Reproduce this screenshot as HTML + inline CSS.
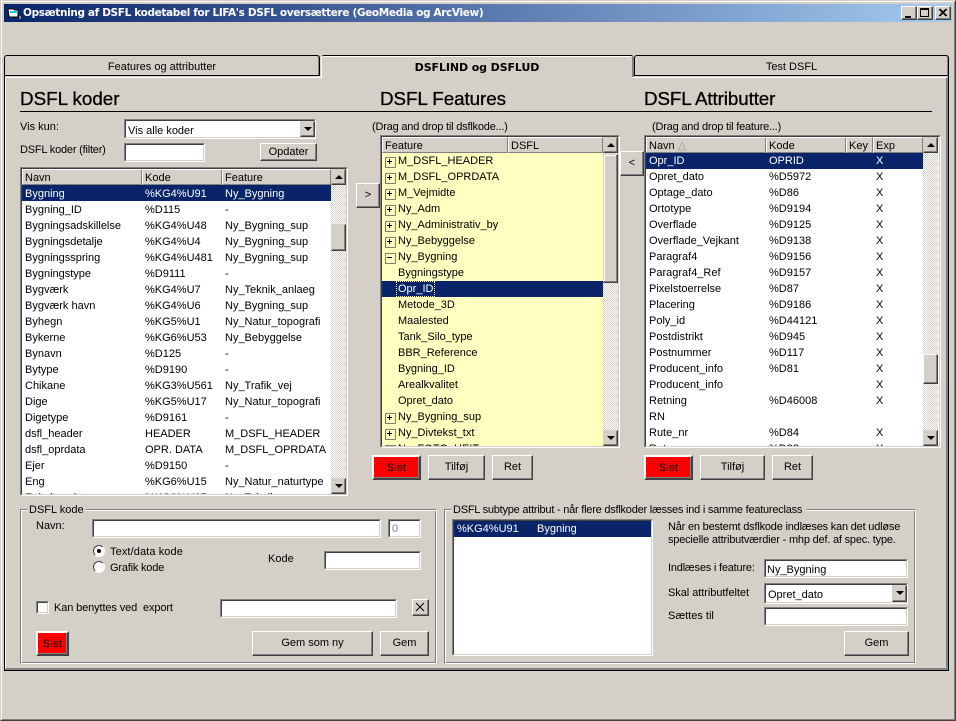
<!DOCTYPE html>
<html><head><meta charset="utf-8"><style>
html,body{margin:0;padding:0}
body{width:956px;height:721px;overflow:hidden;position:relative;background:#d4d0c8;font:11px/13px "Liberation Sans",sans-serif;color:#000}
div,span,table{box-sizing:border-box}
.a{position:absolute}
.t{position:absolute;white-space:nowrap;line-height:13px}
.n{letter-spacing:-.2px}
.s{position:absolute;border:1px solid;border-color:#808080 #fff #fff #808080;background:#fff}
.s>i{display:block;position:absolute;left:0;top:0;right:0;bottom:0;border:1px solid;border-color:#404040 #d4d0c8 #d4d0c8 #404040}
.b{position:absolute;background:#d4d0c8;border:1px solid;border-color:#fff #404040 #404040 #fff;box-shadow:inset -1px -1px #808080;text-align:center;white-space:nowrap}
.r2{position:absolute;background:#f00;border:2px solid;border-color:#fff #404040 #404040 #fff;text-align:center;box-shadow:inset -1px -1px #808080}
.h{position:absolute;top:0;height:16px;background:#d4d0c8;border:1px solid;border-color:#fff #808080 #808080 #fff;line-height:16px;padding-left:2px;white-space:nowrap;overflow:hidden}
.d{position:absolute;width:0;height:0;border-left:4px solid transparent;border-right:4px solid transparent;border-top:4px solid #000}
.u{position:absolute;width:0;height:0;border-left:4px solid transparent;border-right:4px solid transparent;border-bottom:4px solid #000}
.tr{position:absolute;background:repeating-conic-gradient(#fff 0 25%,#d4d0c8 0 50%) 0 0/2px 2px}
.rw{position:absolute;left:0;height:16px;line-height:16px;white-space:nowrap}
.rw span{position:absolute;top:1px}
.l3 .rw span{top:0}
.l1 .c1{left:3px}.l1 .c2{left:123px}.l1 .c3{left:203px}
.l3 .c1{left:3px}.l3 .c2{left:123px}.l3 .c4{left:230px}
.sel{background:#0a246a;color:#fff}
.pm{position:absolute;left:3px;top:4px;width:9px;height:9px;border:1px solid #808080;background:#ffffc0}
.pm:before{content:"";position:absolute;left:1px;top:3px;width:5px;height:1px;background:#000}
.pm.p:after{content:"";position:absolute;left:3px;top:1px;width:1px;height:5px;background:#000}
.hd{position:absolute;font-size:18.8px;line-height:22px;white-space:nowrap;-webkit-text-stroke:.3px #000}
.tab{position:absolute;top:55px;height:21px;background:#d4d0c8;border:1px solid #000;border-bottom:0;border-radius:3px 3px 0 0;box-shadow:inset -1px 0 #808080;text-align:center;line-height:23px}
</style></head><body>

<!-- window frame -->
<div class="a" style="left:0;top:0;width:956px;height:721px;border:1px solid;border-color:#d4d0c8 #404040 #404040 #d4d0c8"></div>
<div class="a" style="left:1px;top:1px;width:954px;height:719px;border:1px solid;border-color:#fff #808080 #808080 #fff"></div>

<!-- title bar -->
<div class="a" style="left:4px;top:4px;width:948px;height:18px;background:linear-gradient(90deg,#0a246a,#a6caf0)"></div>
<svg class="a" style="left:7px;top:7px" width="14" height="13"><path d="M1 2h6l1 1h3v7H2z" fill="#fff" stroke="#000" stroke-width="1"/><path d="M3 4h8v2H3z" fill="#19c8d8"/><path d="M12 9h2v3h-2z" fill="#808080"/></svg>
<div class="t" style="left:23px;top:6px;color:#fff;font:bold 10.5px/14px 'DejaVu Sans',sans-serif;letter-spacing:-.35px">Opsætning af DSFL kodetabel for LIFA's DSFL oversættere (GeoMedia og ArcView)</div>
<div class="b" style="left:901px;top:6px;width:16px;height:14px"><div class="a" style="left:3px;top:9px;width:6px;height:2px;background:#000"></div></div>
<div class="b" style="left:917px;top:6px;width:16px;height:14px"><div class="a" style="left:2px;top:1px;width:9px;height:9px;border:1px solid #000;border-top-width:2px"></div></div>
<div class="b" style="left:935px;top:6px;width:16px;height:14px"><svg class="a" style="left:2px;top:1px" width="10" height="10"><path d="M1 1l7 7M2 1l7 7M8 1L1 8M9 1L2 8" stroke="#000" fill="none"/></svg></div>

<!-- tab panel -->
<div class="a" style="left:4px;top:76px;width:945px;height:595px;border:1px solid #000;border-top:0"></div>
<div class="a" style="left:5px;top:77px;width:943px;height:593px;border:solid;border-width:1px 2px 2px 1px;border-color:#fff #808080 #808080 #fff"></div>

<!-- tabs -->
<div class="tab" style="left:4px;width:316px">Features og attributter</div>
<div class="tab" style="left:634px;width:315px">Test DSFL</div>
<div class="a" style="left:4px;top:75px;width:316px;height:1px;background:#000"></div>
<div class="a" style="left:634px;top:75px;width:315px;height:1px;background:#000"></div>
<div class="a" style="left:321px;top:55px;width:313px;height:22px;background:#d4d0c8;border-top:1px solid #000;border-left:1px solid #fff;border-right:2px solid #808080;border-radius:3px 3px 0 0;box-shadow:inset 0 1px #fff;text-align:center;font:bold 11px/23px 'DejaVu Sans',sans-serif;letter-spacing:-.1px">DSFLIND og DSFLUD</div>
<div class="a" style="left:322px;top:76px;width:310px;height:3px;background:#d4d0c8"></div>

<!-- headings -->
<div class="hd" style="left:20px;top:88px">DSFL koder</div>
<div class="hd" style="left:380px;top:88px;letter-spacing:-.05px">DSFL Features</div>
<div class="hd" style="left:644px;top:88px;letter-spacing:-.1px">DSFL Attributter</div>
<div class="a" style="left:20px;top:111px;width:912px;height:1px;background:#000"></div>

<!-- left top controls -->
<div class="t" style="left:20px;top:121px">Vis kun:</div>
<div class="s" style="left:124px;top:119px;width:192px;height:20px"><i></i>
  <div class="t" style="left:3px;top:4px;padding-top:1px">Vis alle koder</div>
  <div class="b" style="left:175px;top:1px;width:15px;height:16px;border-color:#d4d0c8 #404040 #404040 #d4d0c8"><div class="d" style="left:3px;top:5px"></div></div>
</div>
<div class="t n" style="left:20px;top:144px">DSFL koder (filter)</div>
<div class="s" style="left:124px;top:143px;width:81px;height:19px"><i></i></div>
<div class="b" style="left:260px;top:143px;width:57px;height:18px;line-height:17px">Opdater</div>

<div class="t n" style="left:372px;top:121px">(Drag and drop til dsflkode...)</div>
<div class="t n" style="left:652px;top:121px">(Drag and drop til feature...)</div>

<!-- list 1 -->
<div class="s l1" style="left:20px;top:167px;width:328px;height:329px"><i></i>
 <div class="a" style="left:1px;top:1px;width:324px;height:325px;overflow:hidden;background:#fff">
  <div class="h" style="left:0;width:120px">Navn</div><div class="h" style="left:120px;width:80px">Kode</div><div class="h" style="left:200px;width:109px">Feature</div>
  <div class="a" style="left:0;top:16px;width:309px;height:309px;overflow:hidden">
   <div class="rw sel" style="top:0;width:309px"><span class="c1">Bygning</span><span class="c2">%KG4%U91</span><span class="c3">Ny_Bygning</span></div>
   <div class="rw" style="top:16px"><span class="c1">Bygning_ID</span><span class="c2">%D115</span><span class="c3">-</span></div>
   <div class="rw" style="top:32px"><span class="c1">Bygningsadskillelse</span><span class="c2">%KG4%U48</span><span class="c3">Ny_Bygning_sup</span></div>
   <div class="rw" style="top:48px"><span class="c1">Bygningsdetalje</span><span class="c2">%KG4%U4</span><span class="c3">Ny_Bygning_sup</span></div>
   <div class="rw" style="top:64px"><span class="c1">Bygningsspring</span><span class="c2">%KG4%U481</span><span class="c3">Ny_Bygning_sup</span></div>
   <div class="rw" style="top:80px"><span class="c1">Bygningstype</span><span class="c2">%D9111</span><span class="c3">-</span></div>
   <div class="rw" style="top:96px"><span class="c1">Bygværk</span><span class="c2">%KG4%U7</span><span class="c3">Ny_Teknik_anlaeg</span></div>
   <div class="rw" style="top:112px"><span class="c1">Bygværk havn</span><span class="c2">%KG4%U6</span><span class="c3">Ny_Bygning_sup</span></div>
   <div class="rw" style="top:128px"><span class="c1">Byhegn</span><span class="c2">%KG5%U1</span><span class="c3">Ny_Natur_topografi</span></div>
   <div class="rw" style="top:144px"><span class="c1">Bykerne</span><span class="c2">%KG6%U53</span><span class="c3">Ny_Bebyggelse</span></div>
   <div class="rw" style="top:160px"><span class="c1">Bynavn</span><span class="c2">%D125</span><span class="c3">-</span></div>
   <div class="rw" style="top:176px"><span class="c1">Bytype</span><span class="c2">%D9190</span><span class="c3">-</span></div>
   <div class="rw" style="top:192px"><span class="c1">Chikane</span><span class="c2">%KG3%U561</span><span class="c3">Ny_Trafik_vej</span></div>
   <div class="rw" style="top:208px"><span class="c1">Dige</span><span class="c2">%KG5%U17</span><span class="c3">Ny_Natur_topografi</span></div>
   <div class="rw" style="top:224px"><span class="c1">Digetype</span><span class="c2">%D9161</span><span class="c3">-</span></div>
   <div class="rw" style="top:240px"><span class="c1">dsfl_header</span><span class="c2">HEADER</span><span class="c3">M_DSFL_HEADER</span></div>
   <div class="rw" style="top:256px"><span class="c1">dsfl_oprdata</span><span class="c2">OPR. DATA</span><span class="c3">M_DSFL_OPRDATA</span></div>
   <div class="rw" style="top:272px"><span class="c1">Ejer</span><span class="c2">%D9150</span><span class="c3">-</span></div>
   <div class="rw" style="top:288px"><span class="c1">Eng</span><span class="c2">%KG6%U15</span><span class="c3">Ny_Natur_naturtype</span></div>
   <div class="rw" style="top:304px"><span class="c1">Enkeltpunkt</span><span class="c2">%KG8%U67</span><span class="c3">Ny_Teknik</span></div>
  </div>
  <div class="tr" style="left:309px;top:0;width:15px;height:325px"></div>
  <div class="b" style="left:309px;top:0;width:15px;height:16px;border-color:#d4d0c8 #404040 #404040 #d4d0c8"><div class="u" style="left:3px;top:5px"></div></div>
  <div class="b" style="left:309px;top:55px;width:15px;height:27px;border-color:#d4d0c8 #404040 #404040 #d4d0c8"></div>
  <div class="b" style="left:309px;top:309px;width:15px;height:16px;border-color:#d4d0c8 #404040 #404040 #d4d0c8"><div class="d" style="left:3px;top:5px"></div></div>
 </div>
</div>

<!-- arrow buttons -->
<div class="b" style="left:356px;top:183px;width:24px;height:25px;line-height:22px">&gt;</div>
<div class="b" style="left:620px;top:151px;width:24px;height:25px;line-height:22px">&lt;</div>

<!-- list 2 -->
<div class="s l3" style="left:380px;top:135px;width:240px;height:313px"><i></i>
 <div class="a" style="left:1px;top:1px;width:236px;height:309px;overflow:hidden;background:#ffffc0">
  <div class="h" style="left:0;width:126px">Feature</div><div class="h" style="left:126px;width:95px">DSFL</div>
  <div class="a" style="left:0;top:16px;width:221px;height:293px;overflow:hidden">
   <div class="rw" style="top:0"><i class="pm p"></i><span style="left:16px">M_DSFL_HEADER</span></div>
   <div class="rw" style="top:16px"><i class="pm p"></i><span style="left:16px">M_DSFL_OPRDATA</span></div>
   <div class="rw" style="top:32px"><i class="pm p"></i><span style="left:16px">M_Vejmidte</span></div>
   <div class="rw" style="top:48px"><i class="pm p"></i><span style="left:16px">Ny_Adm</span></div>
   <div class="rw" style="top:64px"><i class="pm p"></i><span style="left:16px">Ny_Administrativ_by</span></div>
   <div class="rw" style="top:80px"><i class="pm p"></i><span style="left:16px">Ny_Bebyggelse</span></div>
   <div class="rw" style="top:96px"><i class="pm"></i><span style="left:16px">Ny_Bygning</span></div>
   <div class="rw" style="top:112px"><span style="left:16px">Bygningstype</span></div>
   <div class="rw sel" style="top:128px;width:221px"><span style="left:14px;top:0;height:16px;line-height:16px;padding:0 2px;outline:1px dotted #ffc;outline-offset:-1px">Opr_ID</span></div>
   <div class="rw" style="top:144px"><span style="left:16px">Metode_3D</span></div>
   <div class="rw" style="top:160px"><span style="left:16px">Maalested</span></div>
   <div class="rw" style="top:176px"><span style="left:16px">Tank_Silo_type</span></div>
   <div class="rw" style="top:192px"><span style="left:16px">BBR_Reference</span></div>
   <div class="rw" style="top:208px"><span style="left:16px">Bygning_ID</span></div>
   <div class="rw" style="top:224px"><span style="left:16px">Arealkvalitet</span></div>
   <div class="rw" style="top:240px"><span style="left:16px">Opret_dato</span></div>
   <div class="rw" style="top:256px"><i class="pm p"></i><span style="left:16px">Ny_Bygning_sup</span></div>
   <div class="rw" style="top:272px"><i class="pm p"></i><span style="left:16px">Ny_Divtekst_txt</span></div>
   <div class="rw" style="top:288px"><i class="pm p"></i><span style="left:16px">Ny_FOTO_HEIT</span></div>
  </div>
  <div class="tr" style="left:221px;top:0;width:15px;height:309px"></div>
  <div class="b" style="left:221px;top:0;width:15px;height:16px;border-color:#d4d0c8 #404040 #404040 #d4d0c8"><div class="u" style="left:3px;top:5px"></div></div>
  <div class="b" style="left:221px;top:17px;width:15px;height:129px;border-color:#d4d0c8 #404040 #404040 #d4d0c8;box-shadow:inset -1px -1px #808080,inset 1px 1px #fff"></div>
  <div class="b" style="left:221px;top:293px;width:15px;height:16px;border-color:#d4d0c8 #404040 #404040 #d4d0c8"><div class="d" style="left:3px;top:5px"></div></div>
 </div>
</div>

<!-- list 3 -->
<div class="s l3" style="left:644px;top:135px;width:297px;height:313px"><i></i>
 <div class="a" style="left:1px;top:1px;width:292px;height:309px;overflow:hidden;background:#fff">
  <div class="h" style="left:0;width:120px">Navn <span style="color:#999">△</span></div><div class="h" style="left:120px;width:80px">Kode</div><div class="h" style="left:200px;width:27px">Key</div><div class="h" style="left:227px;width:50px">Exp</div>
  <div class="a" style="left:0;top:16px;width:277px;height:293px;overflow:hidden">
   <div class="rw sel" style="top:0;width:277px"><span class="c1">Opr_ID</span><span class="c2">OPRID</span><span class="c4">X</span></div>
   <div class="rw" style="top:16px"><span class="c1">Opret_dato</span><span class="c2">%D5972</span><span class="c4">X</span></div>
   <div class="rw" style="top:32px"><span class="c1">Optage_dato</span><span class="c2">%D86</span><span class="c4">X</span></div>
   <div class="rw" style="top:48px"><span class="c1">Ortotype</span><span class="c2">%D9194</span><span class="c4">X</span></div>
   <div class="rw" style="top:64px"><span class="c1">Overflade</span><span class="c2">%D9125</span><span class="c4">X</span></div>
   <div class="rw" style="top:80px"><span class="c1">Overflade_Vejkant</span><span class="c2">%D9138</span><span class="c4">X</span></div>
   <div class="rw" style="top:96px"><span class="c1">Paragraf4</span><span class="c2">%D9156</span><span class="c4">X</span></div>
   <div class="rw" style="top:112px"><span class="c1">Paragraf4_Ref</span><span class="c2">%D9157</span><span class="c4">X</span></div>
   <div class="rw" style="top:128px"><span class="c1">Pixelstoerrelse</span><span class="c2">%D87</span><span class="c4">X</span></div>
   <div class="rw" style="top:144px"><span class="c1">Placering</span><span class="c2">%D9186</span><span class="c4">X</span></div>
   <div class="rw" style="top:160px"><span class="c1">Poly_id</span><span class="c2">%D44121</span><span class="c4">X</span></div>
   <div class="rw" style="top:176px"><span class="c1">Postdistrikt</span><span class="c2">%D945</span><span class="c4">X</span></div>
   <div class="rw" style="top:192px"><span class="c1">Postnummer</span><span class="c2">%D117</span><span class="c4">X</span></div>
   <div class="rw" style="top:208px"><span class="c1">Producent_info</span><span class="c2">%D81</span><span class="c4">X</span></div>
   <div class="rw" style="top:224px"><span class="c1">Producent_info</span><span class="c4">X</span></div>
   <div class="rw" style="top:240px"><span class="c1">Retning</span><span class="c2">%D46008</span><span class="c4">X</span></div>
   <div class="rw" style="top:256px"><span class="c1">RN</span></div>
   <div class="rw" style="top:272px"><span class="c1">Rute_nr</span><span class="c2">%D84</span><span class="c4">X</span></div>
   <div class="rw" style="top:288px"><span class="c1">Rute</span><span class="c2">%D83</span><span class="c4">X</span></div>
  </div>
  <div class="tr" style="left:277px;top:0;width:15px;height:309px"></div>
  <div class="b" style="left:277px;top:0;width:15px;height:16px;border-color:#d4d0c8 #404040 #404040 #d4d0c8"><div class="u" style="left:3px;top:5px"></div></div>
  <div class="b" style="left:277px;top:217px;width:15px;height:30px;border-color:#fff #404040 #404040 #fff"></div>
  <div class="b" style="left:277px;top:293px;width:15px;height:16px;border-color:#d4d0c8 #404040 #404040 #d4d0c8"><div class="d" style="left:3px;top:5px"></div></div>
 </div>
</div>

<!-- action buttons -->
<div class="r2" style="left:372px;top:455px;width:49px;height:25px;line-height:22px">Slet</div>
<div class="b" style="left:428px;top:455px;width:57px;height:25px;line-height:22px">Tilføj</div>
<div class="b" style="left:492px;top:455px;width:41px;height:25px;line-height:22px">Ret</div>
<div class="r2" style="left:644px;top:455px;width:49px;height:25px;line-height:22px">Slet</div>
<div class="b" style="left:700px;top:455px;width:65px;height:25px;line-height:22px">Tilføj</div>
<div class="b" style="left:772px;top:455px;width:41px;height:25px;line-height:22px">Ret</div>

<!-- group DSFL kode -->
<div class="a" style="left:20px;top:509px;width:417px;height:155px;border:1px solid;border-color:#808080 #fff #fff #808080;box-shadow:inset 1px 1px #fff,inset -1px -1px #808080"></div>
<div class="t" style="left:27px;top:504px;background:#d4d0c8;padding:0 2px">DSFL kode</div>
<div class="t" style="left:36px;top:520px">Navn:</div>
<div class="s" style="left:92px;top:519px;width:289px;height:19px"><i></i></div>
<div class="s" style="left:388px;top:519px;width:33px;height:19px"><i></i><div class="t" style="left:3px;top:3px;color:#808080">0</div></div>
<div class="a" style="left:93px;top:545px;width:12px;height:12px;border-radius:50%;background:#fff;border:1px solid;border-color:#404040 #fff #fff #404040"></div>
<div class="a" style="left:97px;top:549px;width:4px;height:4px;border-radius:50%;background:#000"></div>
<div class="t" style="left:110px;top:546px;letter-spacing:.1px">Text/data kode</div>
<div class="a" style="left:93px;top:561px;width:12px;height:12px;border-radius:50%;background:#fff;border:1px solid;border-color:#404040 #fff #fff #404040"></div>
<div class="t n" style="left:110px;top:562px">Grafik kode</div>
<div class="t" style="left:268px;top:553px">Kode</div>
<div class="s" style="left:324px;top:551px;width:97px;height:19px"><i></i></div>
<div class="s" style="left:36px;top:601px;width:13px;height:13px"><i></i></div>
<div class="t" style="left:54px;top:602px;letter-spacing:-.12px">Kan benyttes ved&nbsp; export</div>
<div class="s" style="left:220px;top:599px;width:177px;height:19px"><i></i></div>
<div class="b" style="left:412px;top:599px;width:17px;height:17px"><svg class="a" style="left:2px;top:2px" width="11" height="11"><path d="M1 1l8 8M9 1l-8 8" stroke="#000" fill="none"/></svg></div>
<div class="r2" style="left:36px;top:631px;width:33px;height:25px;line-height:22px">Slet</div>
<div class="b" style="left:252px;top:631px;width:121px;height:25px;line-height:22px">Gem som ny</div>
<div class="b" style="left:380px;top:631px;width:49px;height:25px;line-height:22px">Gem</div>

<!-- group subtype -->
<div class="a" style="left:444px;top:509px;width:472px;height:155px;border:1px solid;border-color:#808080 #fff #fff #808080;box-shadow:inset 1px 1px #fff,inset -1px -1px #808080"></div>
<div class="t" style="left:451px;top:504px;background:#d4d0c8;padding:0 4px 0 2px;letter-spacing:-.23px">DSFL subtype attribut - når flere dsflkoder læsses ind i samme featureclass</div>
<div class="s" style="left:452px;top:519px;width:201px;height:137px"><i></i>
  <div class="rw sel" style="left:1px;top:1px;width:197px"><span style="left:3px;top:0">%KG4%U91</span><span style="left:83px;top:0">Bygning</span></div>
</div>
<div class="t n" style="left:668px;top:521px">Når en bestemt dsflkode indlæses kan det udløse</div>
<div class="t n" style="left:668px;top:534px">specielle attributværdier - mhp def. af spec. type.</div>
<div class="t n" style="left:668px;top:562px">Indlæses i feature:</div>
<div class="s" style="left:764px;top:559px;width:144px;height:19px"><i></i><div class="t" style="left:2px;top:4px">Ny_Bygning</div></div>
<div class="t" style="left:668px;top:587px;letter-spacing:-.05px">Skal attributfeltet</div>
<div class="s" style="left:764px;top:583px;width:144px;height:21px"><i></i>
  <div class="t" style="left:3px;top:5px">Opret_dato</div>
  <div class="b" style="left:127px;top:1px;width:15px;height:17px;border-color:#d4d0c8 #404040 #404040 #d4d0c8"><div class="d" style="left:3px;top:5px"></div></div>
</div>
<div class="t" style="left:668px;top:610px">Sættes til</div>
<div class="s" style="left:764px;top:607px;width:144px;height:19px"><i></i></div>
<div class="b" style="left:844px;top:631px;width:65px;height:25px;line-height:22px">Gem</div>

</body></html>
